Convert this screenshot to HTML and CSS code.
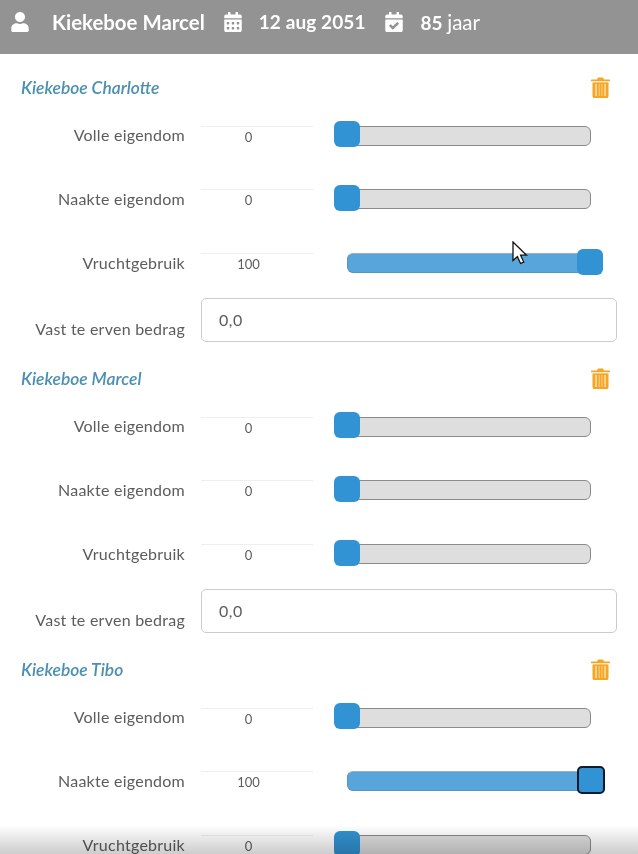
FILE: index.html
```html
<!DOCTYPE html>
<html>
<head>
    <meta charset="utf-8" />
    <title>Kiekeboe Marcel</title>
    <link rel="stylesheet" href="styles.css">
</head>
<body>
<svg class="icon-defs" xmlns="http://www.w3.org/2000/svg">
    <symbol id="i-user" viewBox="0 0 448 512"><path d="M224 256c70.7 0 128-57.3 128-128S294.7 0 224 0 96 57.3 96 128s57.3 128 128 128zm89.6 32h-16.7c-22.2 10.2-46.9 16-72.9 16s-50.6-5.8-72.9-16h-16.7C60.2 288 0 348.2 0 422.4V464c0 26.5 21.5 48 48 48h352c26.5 0 48-21.5 48-48v-41.6c0-74.2-60.2-134.4-134.4-134.4z"/></symbol>
    <symbol id="i-calendar" viewBox="0 0 448 512"><path d="M0 464c0 26.5 21.5 48 48 48h352c26.5 0 48-21.5 48-48V192H0v272zm320-196c0-6.6 5.4-12 12-12h40c6.6 0 12 5.4 12 12v40c0 6.6-5.4 12-12 12h-40c-6.6 0-12-5.4-12-12v-40zm0 128c0-6.6 5.4-12 12-12h40c6.6 0 12 5.4 12 12v40c0 6.6-5.4 12-12 12h-40c-6.6 0-12-5.4-12-12v-40zM192 268c0-6.6 5.4-12 12-12h40c6.6 0 12 5.4 12 12v40c0 6.6-5.4 12-12 12h-40c-6.6 0-12-5.4-12-12v-40zm0 128c0-6.6 5.4-12 12-12h40c6.6 0 12 5.4 12 12v40c0 6.6-5.4 12-12 12h-40c-6.6 0-12-5.4-12-12v-40zM64 268c0-6.6 5.4-12 12-12h40c6.6 0 12 5.4 12 12v40c0 6.6-5.4 12-12 12H76c-6.6 0-12-5.4-12-12v-40zm0 128c0-6.6 5.4-12 12-12h40c6.6 0 12 5.4 12 12v40c0 6.6-5.4 12-12 12H76c-6.6 0-12-5.4-12-12v-40zM400 64h-48V16c0-8.8-7.2-16-16-16h-32c-8.8 0-16 7.2-16 16v48H160V16c0-8.8-7.2-16-16-16h-32c-8.8 0-16 7.2-16 16v48H48C21.5 64 0 85.5 0 112v48h448v-48c0-26.5-21.5-48-48-48z"/></symbol>
    <symbol id="i-calendar-check" viewBox="0 0 448 512"><path d="M436 160H12c-6.627 0-12-5.373-12-12v-36c0-26.51 21.49-48 48-48h48V12c0-6.627 5.373-12 12-12h40c6.627 0 12 5.373 12 12v52h128V12c0-6.627 5.373-12 12-12h40c6.627 0 12 5.373 12 12v52h48c26.51 0 48 21.49 48 48v36c0 6.627-5.373 12-12 12zM12 192h424c6.627 0 12 5.373 12 12v260c0 26.51-21.49 48-48 48H48c-26.51 0-48-21.49-48-48V204c0-6.627 5.373-12 12-12zm333.296 95.947l-28.169-28.398c-4.667-4.705-12.265-4.736-16.97-.068L194.12 364.665l-45.98-46.352c-4.667-4.705-12.266-4.736-16.971-.068l-28.397 28.17c-4.705 4.667-4.736 12.265-.068 16.97l82.601 83.269c4.667 4.705 12.265 4.736 16.97.068l142.953-141.805c4.705-4.667 4.736-12.265.068-16.97z"/></symbol>
    <symbol id="i-trash" viewBox="0 0 19 21">
        <path d="M7 0.500h5l1 2h5.200a.8.8 0 0 1 .8.8v1H0v-1a.8.8 0 0 1 .8-.8H6z"/>
        <path opacity="0.5" d="M2 5.500h15V19a2 2 0 0 1-2 2H4a2 2 0 0 1-2-2z"/>
        <path d="M1.500 5.500h2.500V21a2 2 0 0 1-2.500-2zM15 5.500h2.500V19a2 2 0 0 1-2.500 2zM3 19h13v2H3zM3 5.500h13v1.500H3zM6 7h1.700v12H6zM8.700 7h1.700v12H8.700zM11.400 7h1.700v12h-1.700z"/>
    </symbol>
</svg>

<!-- Top bar -->
<header class="topbar">
    <div class="topbar-item topbar-item-user">
        <svg class="topbar-icon"><use href="#i-user"/></svg>
        <span class="topbar-name">Kiekeboe Marcel</span>
    </div>
    <div class="topbar-item">
        <svg class="topbar-icon"><use href="#i-calendar"/></svg>
        <span class="topbar-date">12 aug 2051</span>
    </div>
    <div class="topbar-item topbar-item-age">
        <svg class="topbar-icon"><use href="#i-calendar-check"/></svg>
        <span>85 <span class="topbar-unit">jaar</span></span>
    </div>
</header>

<main class="heirs">
    <section class="heir">
        <div class="heir-head">
            <h2>Kiekeboe Charlotte</h2>
            <svg class="trash"><use href="#i-trash"/></svg>
        </div>
        <div class="share">
            <label>Volle eigendom</label>
            <div class="share-value">0</div>
            <div class="slider"><div class="slider-thumb"></div></div>
        </div>
        <div class="share">
            <label>Naakte eigendom</label>
            <div class="share-value">0</div>
            <div class="slider"><div class="slider-thumb"></div></div>
        </div>
        <div class="share">
            <label>Vruchtgebruik</label>
            <div class="share-value">100</div>
            <div class="slider slider-full"><div class="slider-thumb"></div></div>
        </div>
        <div class="amount">
            <label>Vast te erven bedrag</label>
            <input type="text" value="0,0" />
        </div>
    </section>

    <section class="heir">
        <div class="heir-head">
            <h2>Kiekeboe Marcel</h2>
            <svg class="trash"><use href="#i-trash"/></svg>
        </div>
        <div class="share">
            <label>Volle eigendom</label>
            <div class="share-value">0</div>
            <div class="slider"><div class="slider-thumb"></div></div>
        </div>
        <div class="share">
            <label>Naakte eigendom</label>
            <div class="share-value">0</div>
            <div class="slider"><div class="slider-thumb"></div></div>
        </div>
        <div class="share">
            <label>Vruchtgebruik</label>
            <div class="share-value">0</div>
            <div class="slider"><div class="slider-thumb"></div></div>
        </div>
        <div class="amount">
            <label>Vast te erven bedrag</label>
            <input type="text" value="0,0" />
        </div>
    </section>

    <section class="heir">
        <div class="heir-head">
            <h2>Kiekeboe Tibo</h2>
            <svg class="trash"><use href="#i-trash"/></svg>
        </div>
        <div class="share">
            <label>Volle eigendom</label>
            <div class="share-value">0</div>
            <div class="slider"><div class="slider-thumb"></div></div>
        </div>
        <div class="share">
            <label>Naakte eigendom</label>
            <div class="share-value">100</div>
            <div class="slider slider-full"><div class="slider-thumb slider-thumb-focus"></div></div>
        </div>
        <div class="share">
            <label>Vruchtgebruik</label>
            <div class="share-value">0</div>
            <div class="slider"><div class="slider-thumb"></div></div>
        </div>
    </section>
</main>

<!-- Mouse pointer and the shade at the bottom of the window -->
<svg class="pointer" viewBox="0 0 16 24"><path d="M1 1v18.500l4.400-4 3.100 7 3.200-1.400-3.100-6.900h6z"/></svg>
<div class="bottom-shade"></div>
</body>
</html>
```

FILE: styles.css
```css
html, body {
    height: 100%;
    overflow: hidden;
}
body {
    margin: 0;
    background-color: #fff;
    color: #5c5c5c;
    font-family: "Lato", "Open Sans", sans-serif;
    font-size: 16px;
    letter-spacing: 0.25px;
}
.icon-defs {
    display: none;
}

/* Top bar */
.topbar {
    display: flex;
    align-items: center;
    gap: 19px;
    box-sizing: border-box;
    height: 54px;
    padding: 0 0 11px 11px;
    background-color: #939393;
    color: #fff;
    font-size: 19px;
    font-weight: 700;
    letter-spacing: 0;
    filter: blur(0.35px);
}
.topbar-item {
    display: flex;
    align-items: center;
    gap: 17px;
}
.topbar-item-user {
    gap: 23px;
}
.topbar-item-age {
    gap: 18px;
}
.topbar-name {
    font-size: 20.400px;
}
.topbar-date {
    letter-spacing: 0.1px;
}
.topbar-icon {
    width: 18px;
    height: 20px;
    fill: #fff;
}
.topbar-unit {
    font-size: 20.500px;
    font-weight: 400;
}

/* One block per heir */
.heirs {
    height: 800px;
    overflow: hidden;
    filter: blur(0.35px);
}
.heir {
    height: 291px;
    box-sizing: border-box;
    padding: 16px 28px 0 21px;
}
.heir-head {
    display: flex;
    align-items: center;
    justify-content: space-between;
    height: 34px;
}
.heir-head h2 {
    margin: 0;
    color: #4b8fb3;
    font-size: 17.400px;
    font-style: italic;
    font-weight: 600;
    letter-spacing: 0;
}
.trash {
    width: 19px;
    height: 21px;
    fill: #f5a623;
}

.share {
    display: flex;
    align-items: center;
    height: 63.67px;
}
.share label,
.amount label {
    flex: none;
    width: 164px;
    margin-right: 16px;
    text-align: right;
}
.share label {
    padding-bottom: 2px;
}
.share-value {
    flex: none;
    box-sizing: border-box;
    width: 112px;
    height: 20px;
    padding: 3px 17px 0 0;
    border-top: 1px solid #eee;
    font-size: 13px;
    letter-spacing: 0;
    line-height: 15px;
    text-align: center;
}

/* Slider */
.slider {
    position: relative;
    flex: none;
    box-sizing: border-box;
    width: 244px;
    height: 20px;
    margin-left: 34px;
    border: 1.500px solid #8a8a8a;
    border-radius: 6px;
    background-color: #dedede;
}
.slider-full {
    border-color: #8fb4cc #5a95bd #5a95bd;
    background-color: #57a5da;
}
.slider-thumb {
    position: absolute;
    top: -5.500px;
    left: -14.500px;
    box-sizing: border-box;
    width: 26px;
    height: 26px;
    border-radius: 6px;
    background-color: #3193d3;
}
.slider-full .slider-thumb {
    left: auto;
    right: -12.500px;
}
.slider-full .slider-thumb-focus {
    top: -6.500px;
    right: -14.500px;
    width: 28px;
    height: 28px;
    border: 2px solid #0d1b2a;
    border-radius: 5px;
}

/* Fixed amount */
.amount {
    display: flex;
    align-items: flex-end;
    height: 50px;
}
.amount label {
    padding-bottom: 7px;
}
.amount input {
    flex: none;
    box-sizing: border-box;
    width: 416px;
    height: 44px;
    margin-bottom: 3px;
    padding: 0 17px;
    border: 1px solid #ccc;
    border-radius: 5px;
    color: #5c5c5c;
    font-family: inherit;
    font-size: 16px;
    letter-spacing: 0.5px;
}

/* Things that lie over the page */
.pointer {
    position: absolute;
    top: 241px;
    left: 512px;
    width: 16px;
    height: 24px;
    fill: #fff;
    stroke: #111;
    stroke-width: 1.300;
}
.bottom-shade {
    position: absolute;
    left: 0;
    right: 0;
    bottom: 0;
    height: 29px;
    background: linear-gradient(rgba(0, 0, 0, 0), rgba(0, 0, 0, 0.2));
    pointer-events: none;
}
```
